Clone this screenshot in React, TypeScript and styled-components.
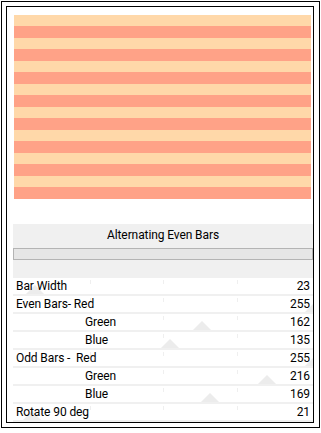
import React from "react";
import styled, { createGlobalStyle } from "styled-components";

const Global = createGlobalStyle`
  html, body { margin: 0; padding: 0; background: #ffffff; }
  body { font-family: Roboto, "Liberation Sans", Arial, sans-serif; }
`;

const Outer = styled.div`
  margin: 1px 0 0 1px;
  width: 319px;
  height: 427px;
  box-sizing: border-box;
  border: 1px solid #000;
  padding: 4px 5px 4px 4px;
`;

const Inner = styled.div`
  box-sizing: border-box;
  height: 100%;
  border: 1px solid #000;
  display: flex;
  flex-direction: column;
  padding: 8px 0 0 6px;
`;

const Preview = styled.div`
  margin-left: 1px;
  width: 297px;
  height: 184px;
  background: repeating-linear-gradient(
    to bottom,
    #ffd8a9 0px,
    #ffd8a9 11px,
    #ffa287 11px,
    #ffa287 23px
  );
`;

const Panel = styled.div`
  margin-top: 25px;
  width: 300px;
  background: #f0f0f0;
  display: flex;
  flex-direction: column;
  flex: 1;
`;

const Title = styled.div`
  height: 16px;
  margin-top: 3px;
  line-height: 16px;
  text-align: center;
  font-size: 12px;
  letter-spacing: -0.1px;
  color: #000;
`;

const Progress = styled.div`
  margin-top: 5px;
  height: 12px;
  box-sizing: border-box;
  border: 1px solid #b4b4b4;
  background: #e6e6e6;
`;

const Rows = styled.div`
  margin-top: 18px;
  display: flex;
  flex-direction: column;
  gap: 2px;
`;

const Row = styled.div`
  position: relative;
  height: 16px;
  background: #fff;
  display: flex;
  align-items: center;
  justify-content: space-between;
  padding: 0 3px 0 3px;
  font-size: 12px;
  letter-spacing: -0.1px;
  color: #000;
  overflow: hidden;
`;

const Label = styled.span<{ $indent: boolean }>`
  position: relative;
  z-index: 1;
  white-space: pre;
  padding-left: ${(p) => (p.$indent ? "69px" : "0")};
`;

const Value = styled.span`
  position: relative;
  z-index: 1;
`;

const Thumb = styled.div`
  position: absolute;
  bottom: 0;
  width: 0;
  height: 0;
  margin-left: -9px;
  border-left: 9px solid transparent;
  border-right: 9px solid transparent;
  border-bottom: 9px solid #ececec;
`;

const Tick = styled.div`
  position: absolute;
  top: 2px;
  width: 1px;
  height: 4px;
  background: #efefef;
`;

type Item = { label: string; indent?: boolean; value: number; max: number };

const items: Item[] = [
  { label: "Bar Width", value: 23, max: 255 },
  { label: "Even Bars- Red", value: 255, max: 255 },
  { label: "Green", indent: true, value: 162, max: 255 },
  { label: "Blue", indent: true, value: 135, max: 255 },
  { label: "Odd Bars -  Red", value: 255, max: 255 },
  { label: "Green", indent: true, value: 216, max: 255 },
  { label: "Blue", indent: true, value: 169, max: 255 },
  { label: "Rotate 90 deg", value: 21, max: 255 },
];

export default function App() {
  return (
    <>
      <Global />
      <Outer>
        <Inner>
          <Preview />
          <Panel>
            <Title>Alternating Even Bars</Title>
            <Progress />
            <Rows>
              {items.map((it, i) => (
                <Row key={i}>
                  <Tick style={{ left: 77 }} />
                  <Tick style={{ left: 150 }} />
                  <Tick style={{ left: 224 }} />
                  <Thumb style={{ left: -6 + (it.value / it.max) * 307 }} />
                  <Label $indent={!!it.indent}>{it.label}</Label>
                  <Value>{it.value}</Value>
                </Row>
              ))}
            </Rows>
          </Panel>
        </Inner>
      </Outer>
    </>
  );
}
